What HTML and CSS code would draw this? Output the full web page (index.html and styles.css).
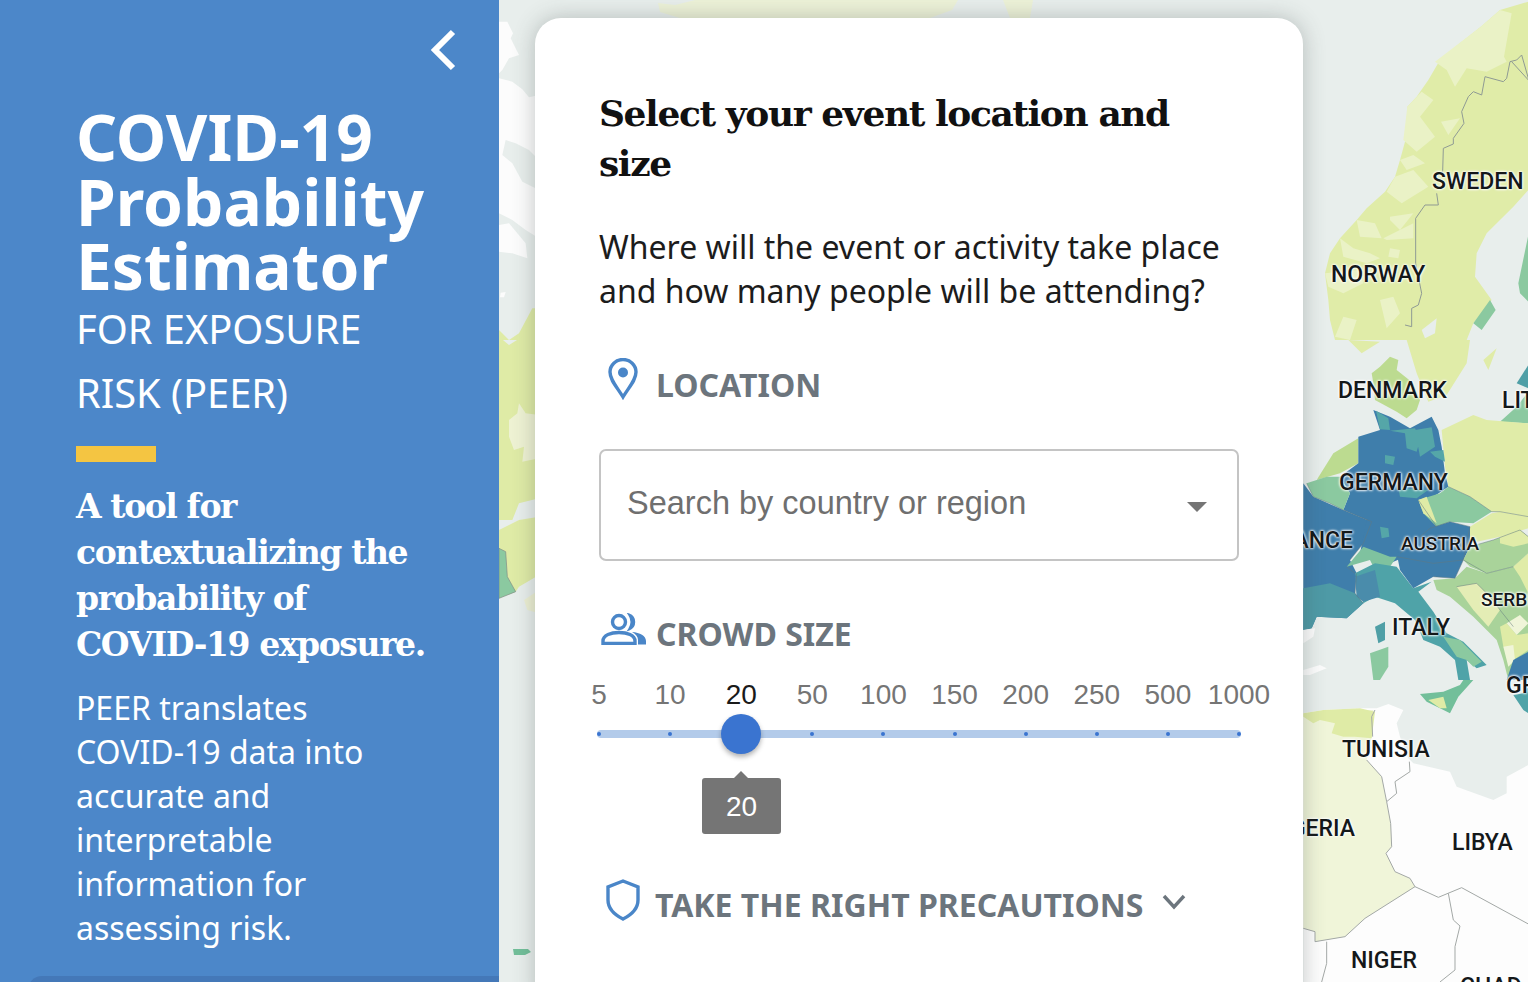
FILE: index.html
```html
<!DOCTYPE html>
<html lang="en">
<head>
<meta charset="utf-8">
<title>COVID-19 Probability Estimator</title>
<link rel="stylesheet" href="styles.css">
</head>
<body>
<div class="app">
  <aside class="side">
    <button class="back" aria-label="Collapse">
      <svg width="32" height="44" viewBox="0 0 32 44"><path d="M26 4 8 22 26 40" fill="none" stroke="#fff" stroke-width="6"/></svg>
    </button>
    <h1 class="title">COVID-19 Probability Estimator</h1>
    <p class="subtitle">FOR EXPOSURE RISK (PEER)</p>
    <div class="bar"></div>
    <h2 class="tagline">A tool for<br>contextualizing the<br>probability of<br>COVID-19 exposure.</h2>
    <p class="desc">PEER translates COVID-19 data into accurate and interpretable information for assessing risk.</p>
    <div class="side-foot"></div>
  </aside>
  <main class="main">
    <svg class="map" width="1029" height="982" viewBox="499 0 1029 982" aria-hidden="true">
      <rect x="499" y="0" width="1029" height="982" fill="#e8eeec"/>
      <path d="M658 3 675 5 695 0H958L952 10 930 18H680L660 12ZM1003 0 1033 0 1030 18H1010Z" fill="#edf2d8"/>
      <g class="soft" transform="translate(499 0) scale(.33333)">
        <path d="M0 65 25 65 42 100 35 115 60 165 30 175 10 210 0 220ZM0 235 40 245 70 268 90 292 120 285V715L80 690 40 660 0 640Z" fill="#fcfcfc"/>
        <path d="M20 420 50 430 90 450 120 480V570L70 545 40 490 10 465Z" fill="#e8eeec"/>
        <path d="M0 675 30 670 80 730 85 775 40 760 0 755ZM5 878 20 876 15 892 3 892Z" fill="#fcfcfc"/>
        <path d="M0 990 30 1020 60 1000 100 925 120 925V1020H0Z" fill="#dfeba6"/>
      </g>
      <g class="soft" transform="translate(499 330) scale(.33333)">
        <path d="M0 20 30 45 70 20 85 0H120V505L60 520 40 570 0 570ZM0 600 60 570 120 560V735L60 770 50 785 0 805Z" fill="#dfeba6"/>
        <path d="M30 270 55 250 60 220 80 250 120 255V385L70 395 75 350 45 360 30 320Z" fill="#eef2d3"/>
        <path d="M0 655 20 665 25 740 50 785 0 805Z" fill="#8bc9a0" stroke="#7f8a86" stroke-width="2"/>
        <path d="M120 780 75 810 85 840 120 850Z" fill="#edf0d4"/>
      </g>
      <path d="M513 949H528L531 952 525 955H514Z" fill="#72bf9a"/>

      <g class="soft" transform="translate(1300 0) scale(.33333)">
        <path d="M685 5 600 30 545 78 480 130 420 180 385 240 350 290 322 320 335 375 315 425 300 480 285 530 255 575 200 625 170 660 120 715 90 760 75 820 85 900 90 960 105 1020H500L520 970 575 900 525 830 530 760 560 700 640 620 685 570Z" fill="#e0eca8"/>
        <path d="M545 78 600 30 635 40 612 170 620 185 560 215 500 205 465 260 440 210 405 185ZM322 320 365 275 400 300 360 350 405 410 350 455 310 420ZM300 480 340 465 375 490 320 510ZM285 530 340 510 385 560 305 610 260 575ZM170 660 225 670 245 715 180 710ZM120 715 160 745 210 760 240 775 200 790 130 770ZM270 650 340 640 300 690 270 660ZM250 715 340 670 340 715 260 720ZM270 745 300 750 295 775 265 770ZM75 820 180 810 190 850 130 880 85 860ZM130 950 170 960 150 1020 105 1010ZM240 900 280 890 300 940 260 985ZM423 365 480 355 445 405Z" fill="#eaf2c6"/>
        <path d="M520 970 570 900 587 930 545 990ZM655 850 685 705V905L660 880Z" fill="#8bc9a0"/>
        <path d="M365 990 410 955 405 1000 375 1015ZM600 885 630 895 625 915Z" fill="#e8eeec"/>
        <path d="M685 235 665 165 650 180 630 185 620 235 610 245 555 230 545 285 520 275 505 290 485 335 492 370 460 415 460 432 430 445 428 515M410 580 415 615 375 615 347 655 347 790 365 880 355 915 335 925 335 980 315 975M635 185 685 240" fill="none" stroke="#8f9a94" stroke-width="3"/>
      </g>

      <g class="soft" transform="translate(1300 340) scale(.33333)">
        <path d="M145 0 185 40 240 5ZM320 0 350 100 385 185 440 165 500 70 510 0ZM550 60 590 25 565 90Z" fill="#e0eca8"/>
        <path d="M650 130 685 75V145Z" fill="#4f9fa6"/>
        <path d="M600 245 650 200 685 155V250Z" fill="#8bc9a0"/>
        <path d="M215 100 240 80 270 50 295 60 290 90 340 130 360 180 350 210 320 235 290 215 225 180 220 130Z" fill="#bcdb90"/>
        <path d="M425 270 520 225 560 240 685 250V530L600 515 575 515 510 470 445 440 435 380Z" fill="#e0eca8"/>
        <path d="M50 420 100 340 175 295 175 370 120 400Z" fill="#bcdb90"/>
        <path d="M10 430 40 470 130 510 215 545 190 610 150 660 170 700 165 760 190 790 140 835 50 830 35 865 10 870Z" fill="#3f7eab"/>
        <path d="M10 745 90 730 165 760 190 790 140 835 50 830 35 865 10 870Z" fill="#4e9aa6"/>
        <path d="M220 210 270 230 330 265 395 230 415 270 425 320 435 400 445 440 400 470 355 480 410 560 340 640 270 670 180 640 200 540 130 510 150 460 120 410 175 370 175 290 240 270Z" fill="#3f7eab"/>
        <path d="M228 212 265 235 270 270 240 268ZM270 272 345 265 360 300 350 335 320 325 315 280ZM345 270 395 262 405 320 360 350ZM255 345 285 350 280 375 255 370ZM390 335 430 330 435 365 405 350ZM295 445 385 450 350 475 300 470ZM240 560 265 565 268 590 245 595Z" fill="#55a6a8"/>
        <path d="M20 430 80 410 120 410 150 460 130 510 90 490 40 470Z" fill="#8bc9a0"/>
        <path d="M355 480 420 460 445 440 510 470 575 515 520 550 450 545 410 560 370 520Z" fill="#8bc9a0"/>
        <path d="M355 480 380 470 410 550 370 520Z" fill="#dfeba6"/>
        <path d="M140 680 190 620 270 650 290 650 270 680 225 690 210 660Z" fill="#7fc29f"/>
        <path d="M165 700 225 670 290 680 340 745 395 725 355 755 400 815 440 880 490 905 560 975 530 985 500 960 510 1020H475L465 960 420 920 370 900 345 840 285 790 225 770 190 790Z" fill="#4fa3a8"/>
        <path d="M290 640 390 565 450 545 510 560 510 620 490 660 465 715 400 710 340 745 300 690Z" fill="#3f7eab"/>
        <path d="M165 710 225 690 240 770 190 785 170 770Z" fill="#4a8cab"/>
        <path d="M430 890 480 900 545 965 520 980 500 960 470 950Z" fill="#8bc9a0"/>
        <path d="M510 560 575 520 600 515 685 530V565L600 590 510 610Z" fill="#e0eca8"/>
        <path d="M465 715 500 680 560 700 640 680 685 640V1020H625L610 960 590 900 520 830 450 770 410 750 400 720Z" fill="#a9d39a"/>
        <path d="M490 660 510 620 580 600 660 570 685 590V640L640 680 560 700 510 680Z" fill="#a9d39a"/>
        <path d="M600 590 660 570 685 590V610L640 620 600 610ZM640 680 685 640V760L660 710Z" fill="#e0eca8"/>
        <path d="M470 740 530 730 570 770 600 810 565 860 520 810Z" fill="#e4edb5"/>
        <path d="M600 860 620 850 650 885 685 880V930L640 960 610 920Z" fill="#dfeba6"/>
        <path d="M620 850 660 825 685 850 650 885ZM610 920 640 915 645 960 625 980Z" fill="#f0f5d9"/>
        <path d="M640 960 685 935V1020H620Z" fill="#3f7eab"/>
        <path d="M225 860 255 845 255 900 235 910Z" fill="#4f9fa6"/>
        <path d="M210 940 265 920 265 980 240 1020H220Z" fill="#8bc9a0"/>
        <path d="M10 870 45 865 40 890 10 910ZM10 990 60 975 80 985 30 1005 10 1005Z" fill="#fcfcfc"/>
        <path d="M20 430 40 470 90 490 130 510 215 545 190 610 150 660M290 650 400 670 490 660 510 560 450 545 390 565 300 640M355 480 410 560M445 440 510 470 575 515 600 515 685 530M510 620 580 600 660 570 685 590M165 700 140 680M170 700 165 760 190 790M400 710 465 715 490 660 560 700 640 680M470 740 530 730 570 770 600 810 640 860" fill="none" stroke="#62787f" stroke-width="2.500" opacity=".6"/>
      </g>

      <g class="soft" transform="translate(1300 680) scale(.33333)">
        <path d="M10 100 70 90 180 85 230 85 265 72 310 90 290 130 300 170 325 235 340 250 450 275 470 320 580 360 620 340 620 290 685 255V906H10Z" fill="#fdfdfd"/>
        <path d="M10 100 220 90 215 170 200 240 245 290 260 365 272 430 275 500 258 520 285 575 330 595 345 620 195 715 135 770 45 785 45 755 10 745Z" fill="#f0f5d9"/>
        <path d="M10 100 70 90 180 85 225 95 215 175 165 170 130 170 95 160 105 130 60 120 40 130 10 110Z" fill="#dfeba6"/>
        <path d="M360 42 430 35 480 15 490 0 520 0 475 50 450 100 420 85 380 65Z" fill="#72bf9a"/>
        <path d="M385 60 430 50 440 85 420 85Z" fill="#dfeba6"/>
        <path d="M640 45 670 40 685 20V100L670 90Z" fill="#4fa3a8"/>
        <path d="M225 90 215 110 218 170M200 240 245 290 260 365 290 340 285 305 330 275 328 245M260 365 272 430 275 500 258 520 285 575 330 595 345 620 415 652 485 623 685 732M345 620 195 715 135 770 45 785 45 755 10 745M80 785 80 850 65 906M445 640 460 720 480 738 465 800 465 870 420 906" fill="none" stroke="#a3a8a6" stroke-width="3"/>
      </g>
    </svg>
    <span class="mlabel l-sweden">SWEDEN</span>
    <span class="mlabel l-norway">NORWAY</span>
    <span class="mlabel l-denmark">DENMARK</span>
    <span class="mlabel l-lith">LITHUANIA</span>
    <span class="mlabel l-germany">GERMANY</span>
    <span class="mlabel l-france">FRANCE</span>
    <span class="mlabel l-austria">AUSTRIA</span>
    <span class="mlabel l-serbia">SERBIA</span>
    <span class="mlabel l-italy">ITALY</span>
    <span class="mlabel l-greece">GREECE</span>
    <span class="mlabel l-tunisia">TUNISIA</span>
    <span class="mlabel l-algeria">ALGERIA</span>
    <span class="mlabel l-libya">LIBYA</span>
    <span class="mlabel l-niger">NIGER</span>
    <span class="mlabel l-chad">CHAD</span>

    <section class="card">
      <h2 class="card-title">Select your event location and size</h2>
      <p class="card-text">Where will the event or activity take place and how many people will be attending?</p>

      <div class="section-head head-location">
        <svg class="ic ic-pin" width="32" height="42" viewBox="0 0 32 42"><path d="M16 39C10 29 3 22 3 14A13 12.500 0 0 1 29 14C29 22 22 29 16 39Z" fill="none" stroke="#4a86c8" stroke-width="3.400"/><circle cx="16" cy="14.500" r="5" fill="#4a86c8"/></svg>
        <span class="label">LOCATION</span>
      </div>

      <div class="select">
        <span class="select-text">Search by country or region</span>
        <span class="caret"></span>
      </div>

      <div class="section-head head-crowd">
        <svg class="ic ic-people" width="46" height="32" viewBox="0 0 46 32"><circle cx="18" cy="9" r="6.500" fill="none" stroke="#4a86c8" stroke-width="3.400"/><path d="M28 1.500A8 8 0 0 1 28 16.500C31 12 31 6 28 1.500Z" fill="#4a86c8" stroke="#4a86c8" stroke-width="2"/><path d="M2 30.500V28C2 22 10 19.500 18 19.500S34 22 34 28V30.500Z" fill="none" stroke="#4a86c8" stroke-width="3.400"/><path d="M31 19C39 19.500 45 23 45 28V31.500H37V27C37 24 35 21 31 19Z" fill="#4a86c8"/></svg>
        <span class="label">CROWD SIZE</span>
      </div>

      <div class="slider">
        <div class="marks">
          <span class="mark">5</span>
          <span class="mark">10</span>
          <span class="mark active">20</span>
          <span class="mark">50</span>
          <span class="mark">100</span>
          <span class="mark">150</span>
          <span class="mark">200</span>
          <span class="mark">250</span>
          <span class="mark">500</span>
          <span class="mark">1000</span>
        </div>
        <div class="track">
          <i class="tick"></i><i class="tick"></i><i class="tick"></i><i class="tick"></i><i class="tick"></i><i class="tick"></i><i class="tick"></i><i class="tick"></i><i class="tick"></i><i class="tick"></i>
          <span class="thumb"></span>
          <span class="tooltip">20</span>
        </div>
      </div>

      <div class="section-head head-prec">
        <svg class="ic ic-shield" width="34" height="42" viewBox="0 0 34 42"><path d="M17 2 32 8V21C32 30 25 36 17 40 9 36 2 30 2 21V8Z" fill="none" stroke="#4a86c8" stroke-width="3.400"/></svg>
        <span class="label">TAKE THE RIGHT PRECAUTIONS</span>
        <svg class="chev" width="26" height="18" viewBox="0 0 26 18"><path d="M3 3 13 14 23 3" fill="none" stroke="#6c757d" stroke-width="3.400"/></svg>
      </div>
    </section>
  </main>
</div>
</body>
</html>
```
FILE: styles.css
```css
* { box-sizing: border-box; }
html, body { margin: 0; height: 100%; }
body { width: 1528px; height: 982px; overflow: hidden; font-family: "Noto Sans", sans-serif; background: #e8eeec; }
.app { display: flex; height: 982px; }

.side { position: relative; flex: 0 0 499px; height: 982px; overflow: hidden; background: #4c87c9; color: #fff; padding: 0 40px 0 76px; }
.back { display: block; margin: 28px 0 0 auto; padding: 0; border: 0; background: none; width: 32px; height: 44px; }
.title { margin: 33px 0 0; width: 360px; font-size: 64px; line-height: 64.500px; font-weight: 700; }
.subtitle { margin: -2px 0 0; width: 340px; font-size: 39.800px; line-height: 64px; font-weight: 400; }
.bar { width: 80px; height: 16px; margin: 21px 0 0; background: #f4c542; }
.tagline { margin: 22px 0 0; font-family: "DejaVu Serif", serif; font-size: 33px; line-height: 46px; font-weight: 700; letter-spacing: -1.400px; white-space: nowrap; }
.desc { margin: 18px 0 0; width: 320px; font-size: 32px; line-height: 44px; font-weight: 400; }
.side-foot { position: absolute; left: 28px; right: 0; bottom: -20px; height: 26px; border-radius: 14px 0 0 0; background: #4478b8; }

.main { position: relative; flex: 1; height: 982px; overflow: hidden; }
.map { position: absolute; left: 0; top: 0; display: block; }
.soft { filter: blur(.5px); }
.mlabel { position: absolute; font-family: Roboto, sans-serif; font-weight: 500; font-size: 23px; line-height: 28px; color: #14181a; white-space: nowrap; text-shadow: 0 0 2px #fff, 0 0 3px #fff, 0 0 3px #fff; }
.l-sweden { left: 933px; top: 168px; }
.l-norway { left: 832px; top: 261px; }
.l-denmark { left: 839px; top: 377px; }
.l-lith { left: 1003px; top: 387px; }
.l-germany { left: 840px; top: 469px; }
.l-france { right: 175px; top: 527px; }
.l-austria { left: 902px; top: 530px; font-size: 19px; }
.l-serbia { left: 982px; top: 586px; font-size: 19px; }
.l-italy { left: 893px; top: 614px; }
.l-greece { left: 1007px; top: 672px; }
.l-tunisia { left: 843px; top: 736px; }
.l-algeria { right: 173px; top: 815px; }
.l-libya { left: 953px; top: 829px; }
.l-niger { left: 852px; top: 947px; }
.l-chad { left: 961px; top: 973px; }

.card { position: relative; width: 768px; height: 1000px; margin: 18px 0 0 36px; padding: 70px 64px 0; background: #fff; border-radius: 26px; box-shadow: 0 0 22px rgba(60, 70, 70, .3); }
.card-title { margin: 0; width: 600px; font-family: "DejaVu Serif", serif; font-size: 36px; line-height: 50px; font-weight: 700; letter-spacing: -1.400px; color: #111; }
.card-text { margin: 37px 0 0; width: 640px; font-size: 32px; line-height: 44px; color: #1c1c1c; }

.section-head { display: flex; align-items: center; }
.label { font-size: 32px; line-height: 42px; font-weight: 700; color: #6c757d; }
.head-location { margin-top: 45px; height: 42px; padding-left: 8px; }
.head-location .label { margin-left: 17px; margin-top: 12px; }
.head-crowd { margin-top: 52px; height: 32px; padding-left: 2px; }
.head-crowd .label { margin-left: 9px; margin-top: 10px; }
.head-prec { margin-top: 141px; height: 42px; padding-left: 7px; }
.head-prec .label { margin-left: 15px; margin-top: 10px; }
.chev { margin-left: 18px; margin-top: 4px; }

.select { display: flex; align-items: flex-start; justify-content: space-between; height: 112px; margin-top: 49px; padding: 33px 30px 0 26px; border: 2px solid #c4c4c4; border-radius: 7px; }
.select-text { font-family: "Liberation Sans", Arial, sans-serif; font-size: 32.500px; line-height: 38px; color: #6f6f6f; }
.caret { width: 0; height: 0; margin-top: 18px; border-left: 10px solid transparent; border-right: 10px solid transparent; border-top: 10px solid #757575; }

.slider { margin-top: 30px; width: 640px; }
.marks { display: flex; justify-content: space-between; height: 40px; margin: 0 -35px; }
.mark { flex: 0 0 70px; text-align: center; font-family: "Liberation Sans", Arial, sans-serif; font-size: 28px; line-height: 40px; color: #757575; white-space: nowrap; }
.mark.active { color: #1a1a1a; }
.track { position: relative; display: flex; justify-content: space-between; align-items: center; height: 8px; margin: 15px -2px 0; border-radius: 4px; background: #b3cbea; }
.tick { display: block; width: 4px; height: 4px; border-radius: 50%; background: #3a74d0; }
.thumb { position: absolute; left: 124px; top: -16px; width: 40px; height: 40px; border-radius: 50%; background: #3a74d0; box-shadow: 0 3px 5px rgba(0, 0, 0, .3); }
.tooltip { position: absolute; left: 105px; top: 48px; width: 79px; height: 56px; border-radius: 3px; background: #757575; color: #fff; text-align: center; font-family: "Liberation Sans", Arial, sans-serif; font-size: 28px; line-height: 58px; }
.tooltip::before { content: ""; position: absolute; left: 32px; top: -7px; width: 0; height: 0; border-left: 7px solid transparent; border-right: 7px solid transparent; border-bottom: 7px solid #757575; }
```
